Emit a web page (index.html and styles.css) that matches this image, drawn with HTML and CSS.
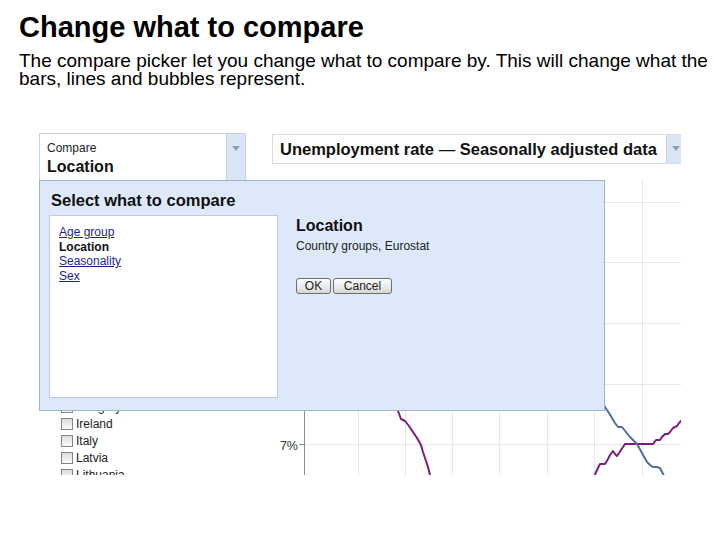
FILE: index.html
```html
<!DOCTYPE html>
<html>
<head>
<meta charset="utf-8">
<link rel="stylesheet" href="styles.css">
</head>
<body>
<h1 class="title">Change what to compare</h1>
<p class="intro">The compare picker let you change what to compare by. This will change what the bars, lines and bubbles represent.</p>

<div class="shot">
  <div class="toprow">
    <div class="compare">
      <div class="compare-body">
        <div class="compare-label">Compare</div>
        <div class="compare-value">Location</div>
      </div>
      <div class="drop"><span class="arrow"></span></div>
    </div>
    <div class="metric">
      <div class="metric-text"><b>Unemployment rate</b> — <b>Seasonally adjusted data</b></div>
      <div class="drop"><span class="arrow"></span></div>
    </div>
  </div>

  <div class="lowrow">
    <ul class="countries">
      <li><span class="cb"></span>Hungary</li>
      <li><span class="cb"></span>Ireland</li>
      <li><span class="cb"></span>Italy</li>
      <li><span class="cb"></span>Latvia</li>
      <li><span class="cb"></span>Lithuania</li>
    </ul>
    <svg class="chart" width="409" height="295" viewBox="0 0 409 295">
      <g stroke="#e6e6e6" stroke-width="1">
        <line x1="86.5" y1="0" x2="86.5" y2="295"/>
        <line x1="133.5" y1="0" x2="133.5" y2="295"/>
        <line x1="180.5" y1="0" x2="180.5" y2="295"/>
        <line x1="227.5" y1="0" x2="227.5" y2="295"/>
        <line x1="275.5" y1="0" x2="275.5" y2="295"/>
        <line x1="322.5" y1="0" x2="322.5" y2="295"/>
        <line x1="370.5" y1="0" x2="370.5" y2="295"/>
        <line x1="32" y1="22.5" x2="409" y2="22.5"/>
        <line x1="32" y1="82.5" x2="409" y2="82.5"/>
        <line x1="32" y1="143.5" x2="409" y2="143.5"/>
        <line x1="32" y1="204.5" x2="409" y2="204.5"/>
        <line x1="32" y1="264.5" x2="409" y2="264.5"/>
      </g>
      <g stroke="#8c8c8c" stroke-width="1">
        <line x1="32.5" y1="0" x2="32.5" y2="295"/>
        <line x1="27" y1="264.5" x2="32" y2="264.5"/>
        <line x1="27" y1="204.5" x2="32" y2="204.5"/>
      </g>
      <text x="26" y="270" text-anchor="end" class="axis">7%</text>
      <polyline fill="none" stroke="#7c1d7e" stroke-width="2" stroke-linejoin="round"
        points="118,200 123,220 126,231 129,239 133,241 137,246 141,252 145,258 149,265 151,272 153,278 156,287 158,295"/>
      <polyline fill="none" stroke="#7c1d7e" stroke-width="2" stroke-linejoin="round"
        points="322,297 325,290 328,284 333,284 336,279 338,275 341,271 343,274 345,276 349,270 353,264 381,264 384,260 388,260 390,257 393,254 396,254 398,252 401,248 405,246 407,243 410,240"/>
      <polyline fill="none" stroke="#4f6f9b" stroke-width="2" stroke-linejoin="round"
        points="322,205 328,218 333,227 337,233 340,238 343,243 346,247 350,247 354,252 358,257 362,261 365,264 370,273 375,282 378,285 381,287 385,287 388,288 390,292 392,296"/>
    </svg>
  </div>

  <div class="picker">
    <div class="picker-title">Select what to compare</div>
    <div class="picker-body">
      <div class="options">
        <a class="opt">Age group</a>
        <span class="opt current">Location</span>
        <a class="opt">Seasonality</a>
        <a class="opt">Sex</a>
      </div>
      <div class="detail">
        <div class="detail-name">Location</div>
        <div class="detail-desc">Country groups, Eurostat</div>
        <div class="buttons">
          <button class="btn btn-ok">OK</button>
          <button class="btn btn-cancel">Cancel</button>
        </div>
      </div>
    </div>
  </div>
</div>
</body>
</html>
```

FILE: styles.css
```css
html, body {
  margin: 0;
  padding: 0;
  background: #ffffff;
}
body {
  font-family: "Liberation Sans", Arial, sans-serif;
  color: #000;
}
.title {
  margin: 0;
  padding: 11px 0 0 19px;
  font-size: 29px;
  line-height: 32px;
  font-weight: bold;
}
.intro {
  margin: 9px 0 0 19px;
  width: 700px;
  font-size: 19px;
  line-height: 18px;
}
.shot {
  position: relative;
  margin: 45px 0 0 39px;
  width: 642px;
  height: 342px;
  overflow: hidden;
  font-family: "Liberation Sans", Arial, sans-serif;
}
.toprow {
  display: flex;
  align-items: flex-start;
  gap: 26px;
  height: 47px;
}
.compare {
  box-sizing: border-box;
  width: 207px;
  flex: none;
  height: 47px;
  display: flex;
  border: 1px solid #c9d3df;
  border-bottom: none;
  background: #fff;
}
.compare-body {
  flex: 1;
  padding: 8px 0 0 7px;
}
.compare-label {
  font-size: 12px;
  line-height: 13px;
  color: #222;
}
.compare-value {
  margin-top: 3px;
  font-size: 16px;
  line-height: 18px;
  font-weight: bold;
  color: #111;
}
.drop {
  width: 19px;
  flex: none;
  background: #dbe6f4;
  border-left: 1px solid #c9d3df;
  display: flex;
  justify-content: center;
  padding-top: 12px;
  box-sizing: border-box;
}
.arrow {
  width: 0;
  height: 0;
  border-left: 4px solid transparent;
  border-right: 4px solid transparent;
  border-top: 5px solid #8c9db6;
}
.metric {
  box-sizing: border-box;
  margin-top: 1px;
  width: 414px;
  flex: none;
  height: 30px;
  display: flex;
  border: 1px solid #d6dde6;
  background: #fff;
}
.metric .drop {
  padding-top: 11px;
}
.metric-text {
  flex: 1;
  padding: 5px 0 0 7px;
  font-size: 16.5px;
  line-height: 19px;
  color: #111;
  white-space: nowrap;
}
.metric-text b {
  font-weight: bold;
}
.lowrow {
  display: flex;
}
.countries {
  list-style: none;
  margin: 0;
  padding: 218.5px 0 0 22px;
  width: 211px;
  font-size: 12px;
  color: #222;
}
.countries li {
  height: 17px;
  display: flex;
  align-items: center;
  white-space: nowrap;
}
.cb {
  width: 10px;
  height: 10px;
  border: 1px solid #7f868e;
  background: linear-gradient(#dcdcdc, #fbfbfb);
  margin-right: 3px;
  flex: none;
}
.chart {
  display: block;
  flex: none;
}
.axis {
  font-family: "Liberation Sans", Arial, sans-serif;
  font-size: 12.5px;
  fill: #333;
}
.picker {
  position: absolute;
  left: 0;
  top: 47px;
  box-sizing: border-box;
  width: 566px;
  height: 231px;
  border: 1px solid #9fb2cc;
  background: #dde9fa;
  padding: 10px 0 0 9px;
}
.picker-title {
  margin-left: 2px;
  font-size: 16.5px;
  line-height: 19px;
  font-weight: bold;
  color: #111;
}
.picker-body {
  display: flex;
  gap: 18px;
  margin-top: 5px;
}
.options {
  box-sizing: border-box;
  width: 229px;
  height: 183px;
  background: #fff;
  border: 1px solid #bccbdd;
  padding: 9px 0 0 9px;
  display: flex;
  flex-direction: column;
  align-items: flex-start;
}
.opt {
  font-size: 12px;
  line-height: 14.5px;
}
a.opt {
  color: #1e1e9c;
  text-decoration: underline;
}
.current {
  font-weight: bold;
  color: #111;
}
.detail {
  padding-top: 2px;
}
.detail-name {
  font-size: 16px;
  line-height: 18px;
  font-weight: bold;
  color: #111;
}
.detail-desc {
  margin-top: 4px;
  font-size: 12px;
  line-height: 14px;
  color: #222;
}
.buttons {
  display: flex;
  gap: 2px;
  margin-top: 25px;
}
.btn {
  box-sizing: border-box;
  height: 16px;
  padding: 0;
  border: 1px solid #6f6f6f;
  border-radius: 3px;
  background: linear-gradient(#fdfdfd, #e9e9e9 60%, #d6d6d6);
  font-family: "Liberation Sans", Arial, sans-serif;
  font-size: 12px;
  line-height: 14px;
  color: #222;
}
.btn-ok {
  width: 35px;
}
.btn-cancel {
  width: 59px;
}
```
